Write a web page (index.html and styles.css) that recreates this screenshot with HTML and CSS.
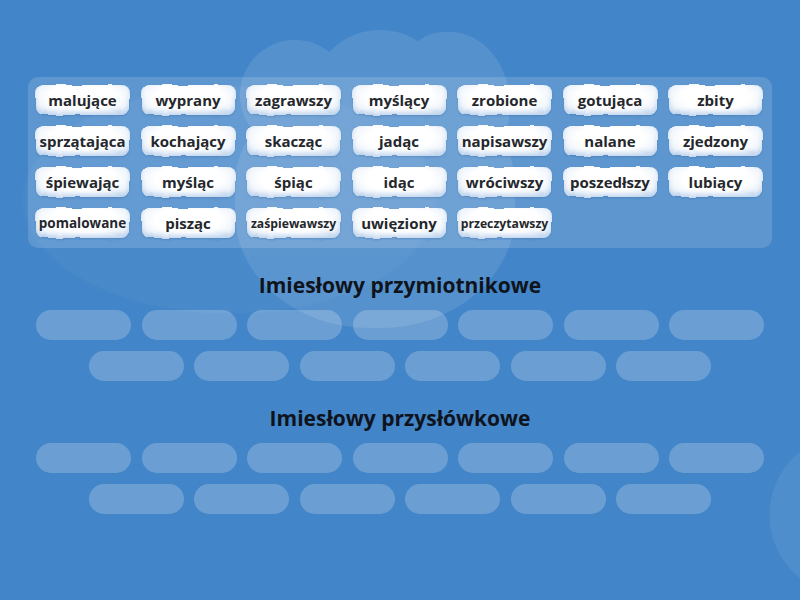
FILE: index.html
```html
<!DOCTYPE html>
<html lang="pl">
<head>
  <meta charset="UTF-8" />
  <meta name="viewport" content="width=device-width, initial-scale=1.0"/>
  <title>Imiesłowy</title>
  <link rel="stylesheet" href="styles.css">
</head>
<body>
  <svg class="defs" width="0" height="0">
    <filter id="fluff" x="-10%" y="-20%" width="120%" height="140%">
      <feTurbulence type="fractalNoise" baseFrequency="0.06" numOctaves="1" seed="4" result="noise"/>
      <feDisplacementMap in="SourceGraphic" in2="noise" scale="4" xChannelSelector="R" yChannelSelector="G"/>
    </filter>
  </svg>

  <div class="cloud">
    <span class="puff puff-a"></span>
    <span class="puff puff-b"></span>
    <span class="puff puff-c"></span>
    <span class="puff puff-d"></span>
  </div>

  <div class="board">
    <div class="words">
      <div class="word">malujące</div>
      <div class="word">wyprany</div>
      <div class="word">zagrawszy</div>
      <div class="word">myślący</div>
      <div class="word">zrobione</div>
      <div class="word">gotująca</div>
      <div class="word">zbity</div>

      <div class="word">sprzątająca</div>
      <div class="word">kochający</div>
      <div class="word">skacząc</div>
      <div class="word">jadąc</div>
      <div class="word">napisawszy</div>
      <div class="word">nalane</div>
      <div class="word">zjedzony</div>

      <div class="word">śpiewając</div>
      <div class="word">myśląc</div>
      <div class="word">śpiąc</div>
      <div class="word">idąc</div>
      <div class="word">wróciwszy</div>
      <div class="word">poszedłszy</div>
      <div class="word">lubiący</div>

      <div class="word small">pomalowane</div>
      <div class="word">pisząc</div>
      <div class="word tiny">zaśpiewawszy</div>
      <div class="word">uwięziony</div>
      <div class="word tiny">przeczytawszy</div>
    </div>

    <h2 class="group-title">Imiesłowy przymiotnikowe</h2>
    <div class="slots">
      <div class="slot"></div><div class="slot"></div><div class="slot"></div><div class="slot"></div>
      <div class="slot"></div><div class="slot"></div><div class="slot"></div>
      <div class="slot"></div><div class="slot"></div><div class="slot"></div>
      <div class="slot"></div><div class="slot"></div><div class="slot"></div>
    </div>

    <h2 class="group-title">Imiesłowy przysłówkowe</h2>
    <div class="slots">
      <div class="slot"></div><div class="slot"></div><div class="slot"></div><div class="slot"></div>
      <div class="slot"></div><div class="slot"></div><div class="slot"></div>
      <div class="slot"></div><div class="slot"></div><div class="slot"></div>
      <div class="slot"></div><div class="slot"></div><div class="slot"></div>
    </div>
  </div>
</body>
</html>
```

FILE: styles.css
```css
* {
  box-sizing: border-box;
}

body {
  margin: 0;
  width: 800px;
  height: 600px;
  overflow: hidden;
  position: relative;
  background-color: #4285c8;
  /* faint clouds at the lower right and under the board's left side */
  background-image:
    radial-gradient(circle at 850px 515px, rgba(255, 255, 255, 0.07) 80px, transparent 81px),
    radial-gradient(ellipse 210px 115px at 230px 200px, rgba(255, 255, 255, 0.04) 97%, transparent 100%);
  font-family: 'Open Sans', 'Noto Sans', sans-serif;
}

.defs {
  position: absolute;
}

/* big soft cloud behind the board */
.cloud {
  position: absolute;
  left: 235px;
  top: 28px;
  width: 280px;
  height: 300px;
  opacity: 0.1;
}

.puff {
  position: absolute;
  background: #fff;
  border-radius: 50%;
}

.puff-a {
  left: 5px;
  top: 12px;
  width: 110px;
  height: 110px;
}

.puff-b {
  left: 80px;
  top: 2px;
  width: 130px;
  height: 120px;
}

.puff-c {
  left: 160px;
  top: 4px;
  width: 115px;
  height: 140px;
  border-radius: 45% 55% 50% 50%;
}

.puff-d {
  left: 0;
  top: 60px;
  width: 280px;
  height: 240px;
  border-radius: 40% 40% 48% 48%;
}

.board {
  position: relative;
  padding: 77px 28px 0;
}

.words {
  display: grid;
  grid-template-columns: repeat(7, 95px);
  grid-auto-rows: 32px;
  column-gap: 10.5px;
  row-gap: 9px;
  padding: 7px 7px 8px;
  height: 171px;
  border-radius: 10px;
  background: rgba(255, 255, 255, 0.15);
}

.word {
  position: relative;
  z-index: 0;
  display: flex;
  align-items: center;
  justify-content: center;
  font-size: 15px;
  font-weight: 700;
  color: #24272c;
  white-space: nowrap;
}

.word::before {
  content: '';
  position: absolute;
  inset: 1px;
  z-index: -1;
  border-radius: 8px;
  background: radial-gradient(ellipse at 50% 40%, #ffffff 50%, #f1f6fc 72%, #d2e2f3 100%);
  box-shadow: inset 0 -3px 5px rgba(160, 192, 228, 0.55), 0 1px 2px rgba(30, 80, 140, 0.25);
  filter: url(#fluff);
}

.word.small {
  font-size: 13.5px;
}

.word.tiny {
  font-size: 12.2px;
}

.group-title {
  margin: 25px 0 13px;
  text-align: center;
  font-size: 21px;
  line-height: 24px;
  font-weight: 700;
  color: #0f141c;
}

.slots {
  display: flex;
  flex-wrap: wrap;
  justify-content: center;
  column-gap: 10.5px;
  row-gap: 11px;
  padding: 0 8px;
}

.slot {
  width: 95px;
  height: 30px;
  border-radius: 15px;
  background: rgba(255, 255, 255, 0.22);
}
```
